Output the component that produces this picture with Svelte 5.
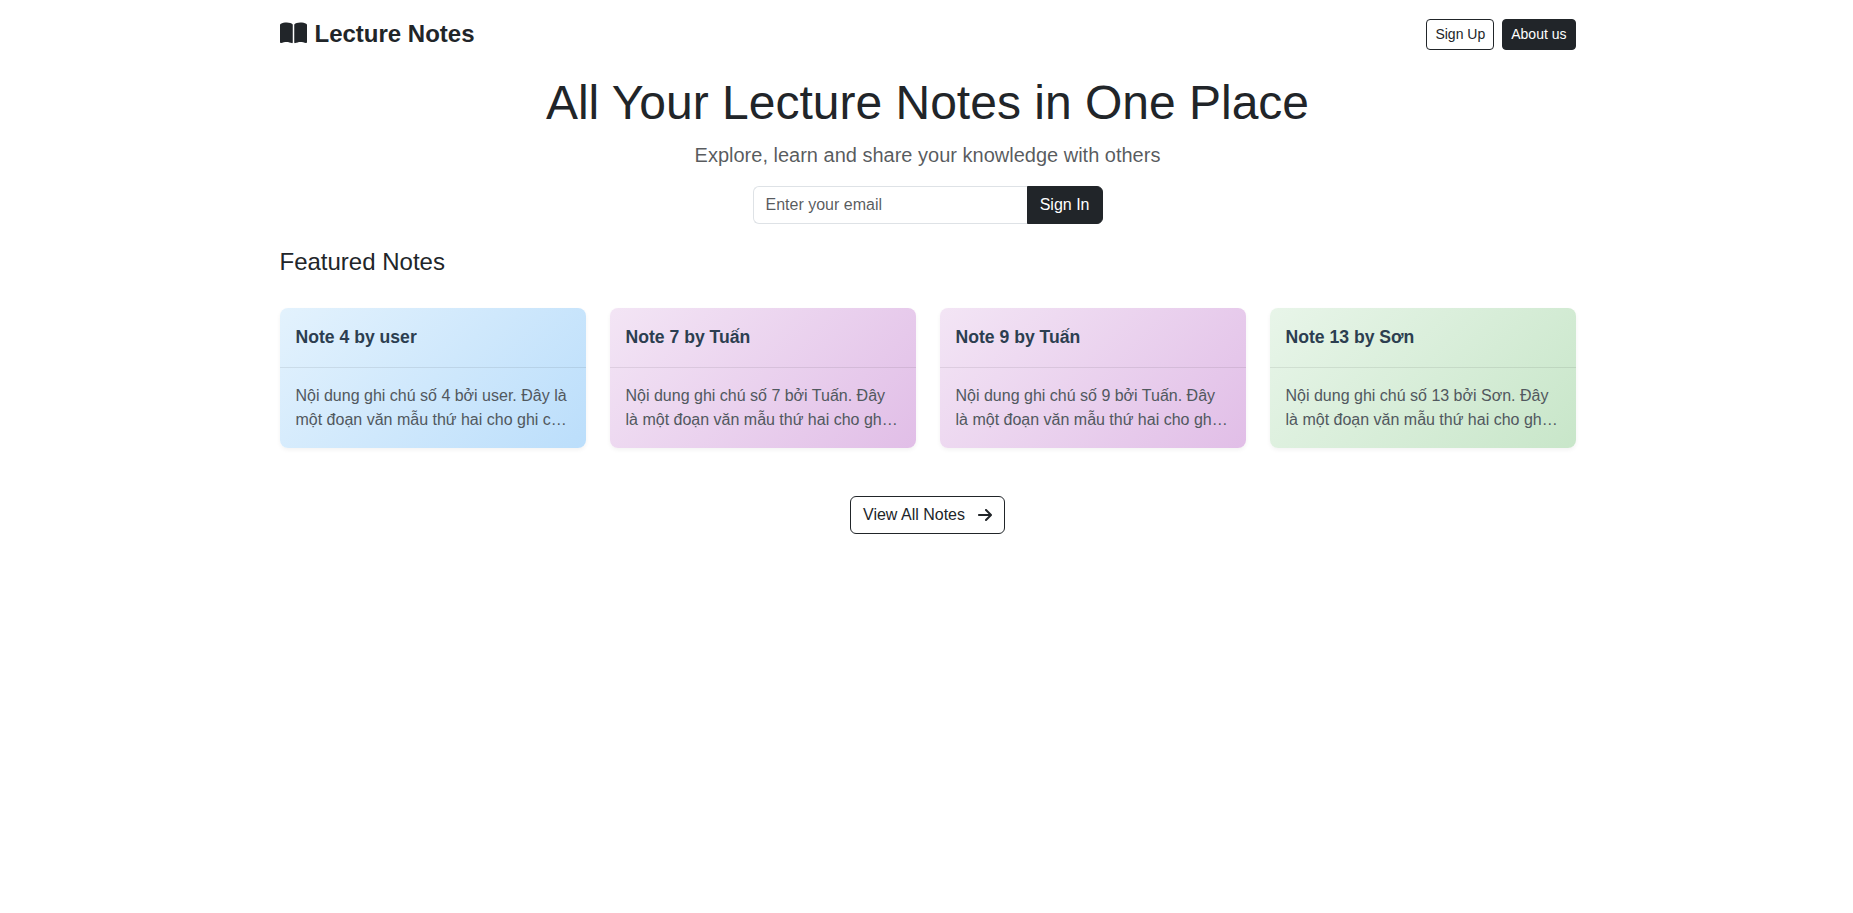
<script>
  const notes = [
    { title: 'Note 4 by user', tone: 'blue', text: 'Nội dung ghi chú số 4 bởi user. Đây là một đoạn văn mẫu thứ hai cho ghi chú số 4.' },
    { title: 'Note 7 by Tuấn', tone: 'purple', text: 'Nội dung ghi chú số 7 bởi Tuấn. Đây là một đoạn văn mẫu thứ hai cho ghi chú số 7.' },
    { title: 'Note 9 by Tuấn', tone: 'purple', text: 'Nội dung ghi chú số 9 bởi Tuấn. Đây là một đoạn văn mẫu thứ hai cho ghi chú số 9.' },
    { title: 'Note 13 by Sơn', tone: 'green', text: 'Nội dung ghi chú số 13 bởi Sơn. Đây là một đoạn văn mẫu thứ hai cho ghi chú số 13.' }
  ];
</script>

<div class="container">
  <header>
    <div class="brand">
      <svg viewBox="0 0 576 512" width="27" height="24" fill="currentColor"><path d="M249.6 471.5c10.8 3.8 22.4-4.1 22.4-15.5V78.6c0-4.2-1.6-8.4-5-11C247.4 52 202.4 32 144 32C93.5 32 46.3 45.3 18.1 56.1C6.8 60.5 0 71.7 0 83.8V454.1c0 11.9 12.8 20.2 24.1 16.5C55.6 460.1 105.5 448 144 448c33.9 0 79 14 105.6 23.5zm76.8 0C353 462 398.1 448 432 448c38.5 0 88.4 12.1 119.9 22.6c11.3 3.8 24.1-4.6 24.1-16.5V83.8c0-12.1-6.8-23.3-18.1-27.6C529.7 45.3 482.5 32 432 32c-58.4 0-103.4 20-123 35.6c-3.3 2.6-5 6.8-5 11V456c0 11.4 11.7 19.3 22.4 15.5z" /></svg>
      <span>Lecture Notes</span>
    </div>
    <nav>
      <button class="btn small">Sign Up</button>
      <button class="btn small dark">About us</button>
    </nav>
  </header>

  <section class="hero">
    <h1>All Your Lecture Notes in One Place</h1>
    <p>Explore, learn and share your knowledge with others</p>
    <form>
      <input type="email" placeholder="Enter your email" />
      <button type="button" class="btn dark">Sign In</button>
    </form>
  </section>

  <h2>Featured Notes</h2>
  <div class="cards">
    {#each notes as note}
      <article class={note.tone}>
        <h3>{note.title}</h3>
        <div class="body"><p>{note.text}</p></div>
      </article>
    {/each}
  </div>

  <div class="more">
    <button class="btn">
      <span>View All Notes</span>
      <svg viewBox="0 0 448 512" width="14" height="16" fill="currentColor"><path d="M438.6 278.6c12.5-12.5 12.5-32.8 0-45.3l-160-160c-12.5-12.5-32.8-12.5-45.3 0s-12.5 32.8 0 45.3L338.8 224 32 224c-17.7 0-32 14.3-32 32s14.3 32 32 32l306.7 0L233.4 393.4c-12.5 12.5-12.5 32.8 0 45.3s32.8 12.5 45.3 0l160-160z" /></svg>
    </button>
  </div>
</div>

<style>
  :global(body) {
    margin: 0;
    background: #fff;
    color: #212529;
    font: 16px/1.5 "Liberation Sans", Arial, sans-serif;
  }
  * { box-sizing: border-box; }
  h1, h2, h3, p { margin: 0; font-weight: 400; }
  .container {
    width: 1296px;
    margin: 0 auto 0 calc(50% - 647px);
    padding-top: 16px;
  }
  header { display: flex; justify-content: space-between; align-items: center; height: 36px; }
  .brand { display: flex; align-items: center; gap: 8px; font-size: 24px; font-weight: 700; }
  .brand svg { margin-bottom: 2px; }
  nav { display: flex; gap: 8px; }
  .btn {
    font: 16px/24px "Liberation Sans", Arial, sans-serif;
    color: #212529;
    background: transparent;
    border: 1px solid #212529;
    border-radius: 6px;
    padding: 6px 12px;
  }
  .btn.small { font-size: 14px; line-height: 21px; padding: 4px 8px; border-radius: 4px; }
  .btn.dark { background: #212529; color: #fff; }
  .hero { display: flex; flex-direction: column; align-items: center; padding-top: 22px; }
  h1 { font-size: 48px; line-height: 57.6px; margin-bottom: 8px; }
  .hero p { font-size: 20px; line-height: 30px; margin-bottom: 16px; color: rgba(33, 37, 41, .75); }
  form { display: flex; width: 350px; height: 38px; }
  input {
    flex: 1;
    min-width: 0;
    font: 16px/24px "Liberation Sans", Arial, sans-serif;
    padding: 6px 12px;
    border: 1px solid #dee2e6;
    border-right: 0;
    border-radius: 6px 0 0 6px;
    background: #fff;
  }
  input::placeholder { color: rgba(33, 37, 41, .75); opacity: 1; }
  form .btn { border-radius: 0 6px 6px 0; }
  h2 { font-size: 24px; line-height: 28.8px; margin-top: 24px; margin-bottom: 31.6px; }
  .cards { display: grid; grid-template-columns: repeat(4, 1fr); gap: 24px; }
  article { border-radius: 8px; box-shadow: 0 2px 4px rgba(0, 0, 0, .05); }
  .blue { background: linear-gradient(135deg, #e3f2fd, #bbdefb); }
  .purple { background: linear-gradient(135deg, #f3e5f5, #e1bee7); }
  .green { background: linear-gradient(135deg, #e8f5e9, #c8e6c9); }
  h3 {
    height: 60px;
    padding: 16px;
    font-size: 17.6px;
    font-weight: 600;
    line-height: 26px;
    color: #2c3e50;
    border-bottom: 1px solid rgba(0, 0, 0, .08);
  }
  .body { padding: 16px; }
  .body p {
    display: -webkit-box;
    -webkit-box-orient: vertical;
    -webkit-line-clamp: 2;
    line-clamp: 2;
    overflow: hidden;
    color: #51585e;
  }
  .more { display: flex; justify-content: center; margin-top: 48px; }
  .more .btn { display: flex; align-items: center; gap: 13px; }
</style>
